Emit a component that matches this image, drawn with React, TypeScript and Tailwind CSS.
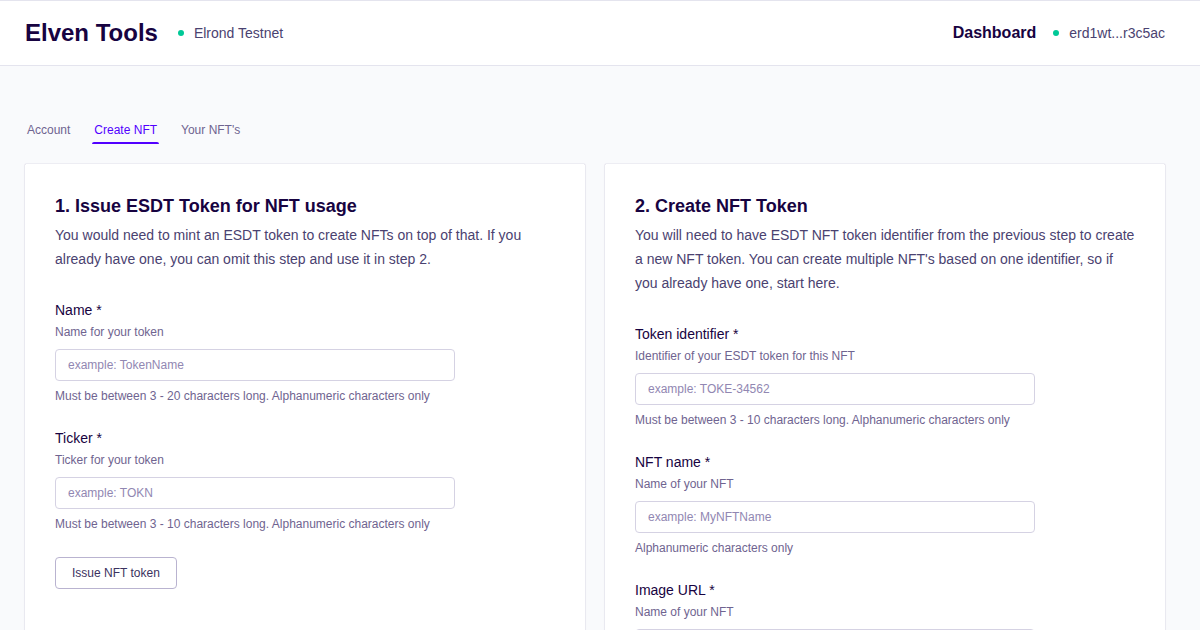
type FieldProps = { id: string; label: string; description: string; placeholder: string; hint: string };

function Field({ id, label, description, placeholder, hint }: FieldProps) {
  return (
    <div className="mb-[22px]">
      <label htmlFor={id} className="block text-sm leading-[22px] text-[#170341]">{label} *</label>
      <p className="text-xs leading-[22px] text-[#6f6490]">{description}</p>
      <input
        id={id}
        type="text"
        placeholder={placeholder}
        className="mt-1.5 block h-8 w-full max-w-[400px] rounded border border-[#d5d2e3] bg-white px-3 text-xs text-[#170341] outline-none placeholder:text-[#9187b2] focus:border-[#5200ff]"
      />
      <p className="mt-1.5 text-xs leading-[18px] text-[#6f6490]">{hint}</p>
    </div>
  );
}

const issueFields: FieldProps[] = [
  { id: "token-name", label: "Name", description: "Name for your token", placeholder: "example: TokenName", hint: "Must be between 3 - 20 characters long. Alphanumeric characters only" },
  { id: "ticker", label: "Ticker", description: "Ticker for your token", placeholder: "example: TOKN", hint: "Must be between 3 - 10 characters long. Alphanumeric characters only" },
];

const createFields: FieldProps[] = [
  { id: "token-identifier", label: "Token identifier", description: "Identifier of your ESDT token for this NFT", placeholder: "example: TOKE-34562", hint: "Must be between 3 - 10 characters long. Alphanumeric characters only" },
  { id: "nft-name", label: "NFT name", description: "Name of your NFT", placeholder: "example: MyNFTName", hint: "Alphanumeric characters only" },
  { id: "image-url", label: "Image URL", description: "Name of your NFT", placeholder: "", hint: "" },
];

function Dot() {
  return <span className="size-1.5 rounded-full bg-[#00c997]" />;
}

export default function App() {
  return (
    <div className="h-screen overflow-hidden bg-[#f9fafc] font-['Liberation_Sans',sans-serif] text-[#170341]">
      <header className="flex h-[66px] items-center justify-between border-y border-[#e4e4ee] bg-white pr-[35px] pl-[25px]">
        <div className="flex items-center">
          <a href="#" className="text-2xl leading-8 font-bold">Elven Tools</a>
          <div className="ml-5 flex items-center gap-2.5 text-sm text-[#4a4270]"><Dot />Elrond Testnet</div>
        </div>
        <nav className="flex items-center">
          <a href="#dashboard" className="text-base font-bold">Dashboard</a>
          <a href="#wallet" className="ml-[17px] flex items-center gap-2.5 text-sm text-[#4a4270]"><Dot />erd1wt...r3c5ac</a>
        </nav>
      </header>
      <main className="pt-[50px] pr-[35px] pl-[25px]">
        <nav className="flex gap-5 text-xs text-[#6f6490]">
          <a href="#account" className="px-0.5 pt-1.5">Account</a>
          <a href="#create" className="pt-1.5 text-[#5200ff]">
            <span className="block px-0.5">Create NFT</span>
            <span className="mt-1 block h-0.5 rounded-t-xs bg-[#5200ff]" />
          </a>
          <a href="#nfts" className="px-0.5 pt-1.5">Your NFT's</a>
        </nav>
        <div className="mt-5 grid grid-cols-2 gap-5">
          <section className="rounded-[1px] bg-white px-[30px] pt-[30px] pb-8 shadow-[0_0_1px_#8a82a8,0_1px_2px_#e4e2ec]">
            <h2 className="text-lg leading-6 font-bold">1. Issue ESDT Token for NFT usage</h2>
            <p className="mt-[5px] mb-7 text-sm leading-6 text-[#4a4270]">You would need to mint an ESDT token to create NFTs on top of that. If you already have one, you can omit this step and use it in step 2.</p>
            <form>
              {issueFields.map((f) => <Field key={f.id} {...f} />)}
              <button type="button" className="mt-0.5 h-8 rounded border border-[#b9b3d0] px-4 text-xs text-[#3b3260]">Issue NFT token</button>
            </form>
          </section>
          <section className="rounded-[1px] bg-white px-[30px] pt-[30px] pb-8 shadow-[0_0_1px_#8a82a8,0_1px_2px_#e4e2ec]">
            <h2 className="text-lg leading-6 font-bold">2. Create NFT Token</h2>
            <p className="mt-[5px] mb-7 text-sm leading-6 text-[#4a4270]">You will need to have ESDT NFT token identifier from the previous step to create a new NFT token. You can create multiple NFT's based on one identifier, so if you already have one, start here.</p>
            <form>
              {createFields.map((f) => <Field key={f.id} {...f} />)}
            </form>
          </section>
        </div>
      </main>
    </div>
  );
}
